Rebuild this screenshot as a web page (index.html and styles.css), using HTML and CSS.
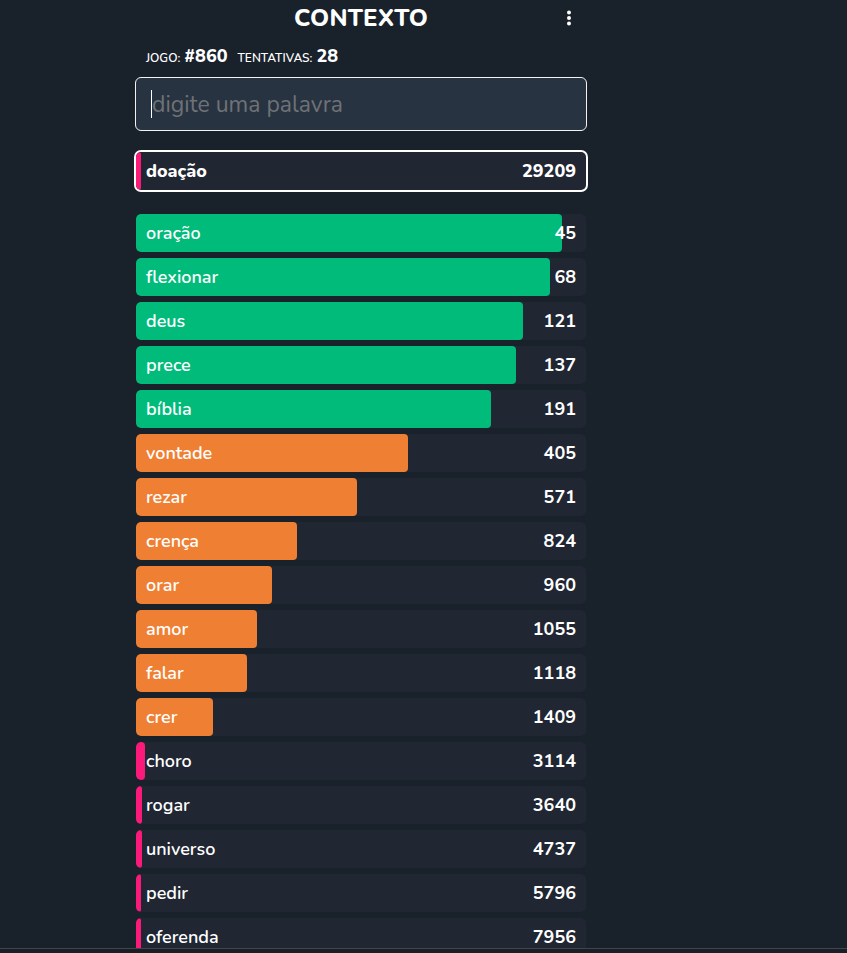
FILE: index.html
```html
<!DOCTYPE html>
<html lang="pt">
<head>
<meta charset="utf-8">
<title>Contexto</title>
<link rel="stylesheet" href="styles.css">
</head>
<body>
<main class="wrap">
  <header class="top">
    <h1 class="title">CONTEXTO</h1>
    <button class="menu" aria-label="menu">
      <svg width="6" height="16" viewBox="0 0 6 16"><circle cx="3" cy="2.5" r="2" fill="#fff"/><circle cx="3" cy="8" r="2" fill="#fff"/><circle cx="3" cy="13.5" r="2" fill="#fff"/></svg>
    </button>
  </header>
  <div class="info">
    <span class="lbl">JOGO:</span><span class="val">#860</span>
    <span class="lbl lbl2">TENTATIVAS:</span><span class="val">28</span>
  </div>
  <div class="input"><span class="caret"></span><span class="ph">digite uma palavra</span></div>

  <div class="row current"><div class="bar pink" style="width:5px"></div><span class="w">doação</span><span class="n">29209</span></div>

  <div class="list">
    <div class="row"><div class="bar green" style="width:426px"></div><span class="w">oração</span><span class="n">45</span></div>
    <div class="row"><div class="bar green" style="width:414px"></div><span class="w">flexionar</span><span class="n">68</span></div>
    <div class="row"><div class="bar green" style="width:387px"></div><span class="w">deus</span><span class="n">121</span></div>
    <div class="row"><div class="bar green" style="width:380px"></div><span class="w">prece</span><span class="n">137</span></div>
    <div class="row"><div class="bar green" style="width:355px"></div><span class="w">bíblia</span><span class="n">191</span></div>
    <div class="row"><div class="bar orange" style="width:272px"></div><span class="w">vontade</span><span class="n">405</span></div>
    <div class="row"><div class="bar orange" style="width:221px"></div><span class="w">rezar</span><span class="n">571</span></div>
    <div class="row"><div class="bar orange" style="width:161px"></div><span class="w">crença</span><span class="n">824</span></div>
    <div class="row"><div class="bar orange" style="width:136px"></div><span class="w">orar</span><span class="n">960</span></div>
    <div class="row"><div class="bar orange" style="width:121px"></div><span class="w">amor</span><span class="n">1055</span></div>
    <div class="row"><div class="bar orange" style="width:111px"></div><span class="w">falar</span><span class="n">1118</span></div>
    <div class="row"><div class="bar orange" style="width:77px"></div><span class="w">crer</span><span class="n">1409</span></div>
    <div class="row"><div class="bar pink" style="width:9px"></div><span class="w">choro</span><span class="n">3114</span></div>
    <div class="row"><div class="bar pink" style="width:6px"></div><span class="w">rogar</span><span class="n">3640</span></div>
    <div class="row"><div class="bar pink" style="width:6px"></div><span class="w">universo</span><span class="n">4737</span></div>
    <div class="row"><div class="bar pink" style="width:5px"></div><span class="w">pedir</span><span class="n">5796</span></div>
    <div class="row"><div class="bar pink" style="width:5px"></div><span class="w">oferenda</span><span class="n">7956</span></div>
  </div>
</main>
<div class="bottomline"></div>
</body>
</html>
```

FILE: styles.css
```css
html, body {
  margin: 0;
  background: #19212b;
  height: 953px;
  overflow: hidden;
}
body {
  font-family: "Nunito", "Lato", "Noto Sans", sans-serif;
  color: #fff;
}
.wrap {
  width: 450px;
  margin-left: 136px;
  display: flex;
  flex-direction: column;
}
.top {
  height: 36px;
  display: flex;
  align-items: center;
  justify-content: center;
  position: relative;
}
.title {
  margin: 0;
  font-size: 24px;
  font-weight: 800;
  letter-spacing: 0.2px;
  line-height: 36px;
}
.menu {
  position: absolute;
  right: 12px;
  top: 10px;
  background: none;
  border: 0;
  padding: 0;
  width: 10px;
  height: 16px;
  display: flex;
  justify-content: center;
}
.info {
  margin-top: 8px;
  padding-left: 10px;
  height: 24px;
  display: flex;
  align-items: baseline;
}
.lbl {
  font-size: 12px;
  font-weight: 600;
  margin-right: 4px;
}
.lbl2 { margin-left: 10px; }
.val {
  font-size: 18px;
  font-weight: 800;
}
.input {
  margin-top: 9px;
  margin-left: -1px;
  margin-right: -1px;
  height: 52px;
  border: 1px solid #f2f2f2;
  border-radius: 6px;
  background: #283342;
  display: flex;
  align-items: center;
  padding-left: 15px;
  box-sizing: content-box;
}
.caret {
  width: 1px;
  height: 28px;
  background: #fff;
}
.ph {
  font-size: 23px;
  color: #6f7275;
}
.row {
  height: 38px;
  border-radius: 5px;
  background: #202632;
  display: flex;
  align-items: center;
  justify-content: space-between;
  padding: 0 10px;
  position: relative;
  overflow: hidden;
  font-size: 18px;
  font-weight: 700;
}
.row .w, .row .n { position: relative; }
.row .w { font-weight: 600; }
.current {
  margin-top: 21px;
  box-shadow: 0 0 0 2px #fff;
  border-radius: 5px;
}
.current .w { font-weight: 800; }
.current .n { font-weight: 800; }
.bar {
  position: absolute;
  left: 0;
  top: 0;
  bottom: 0;
  border-radius: 4px;
}
.green { background: #01bb7b; }
.orange { background: #ef7f33; }
.pink { background: #fb1a7a; }
.list {
  margin-top: 24px;
  display: flex;
  flex-direction: column;
  gap: 6px;
}
.bottomline {
  position: fixed;
  left: 0;
  right: 0;
  bottom: 0;
  height: 4px;
  background: #1a1f26;
  border-top: 1px solid #3c4550;
}
```
